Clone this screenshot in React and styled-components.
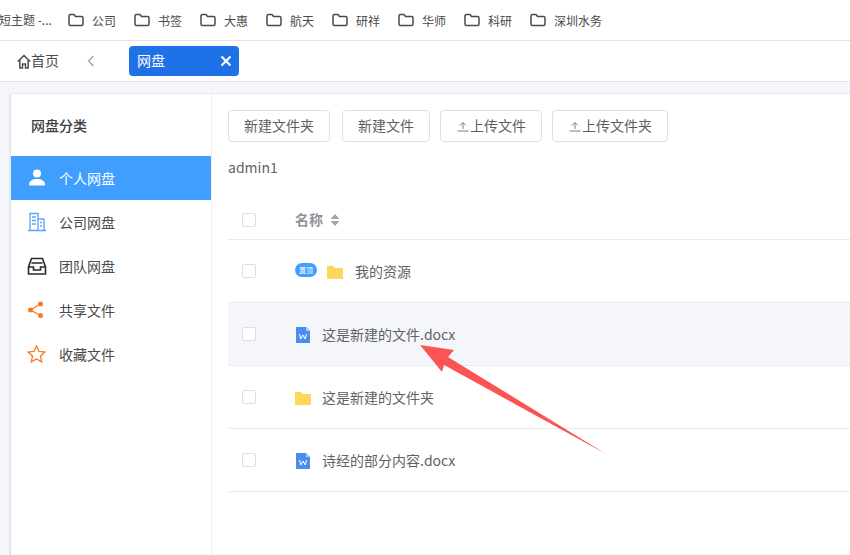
import React from "react";
import styled, { createGlobalStyle } from "styled-components";

const Global = createGlobalStyle`
  html, body { margin: 0; padding: 0; background: #fff; }
  body { font-family: "Noto Sans CJK SC", "Noto Sans", sans-serif; overflow: hidden; }
  * { box-sizing: border-box; }
`;

const Page = styled.div`
  position: relative;
  width: 850px;
  height: 555px;
  overflow: hidden;
  display: flex;
  flex-direction: column;
  background: #f4f6fb;
`;

const BookmarkBar = styled.div`
  height: 41px;
  flex: none;
  display: flex;
  align-items: center;
  background: #fff;
  border-bottom: 1px solid #e2e2e2;
  padding-left: 68px;
  position: relative;
  overflow: hidden;
`;

const Clipped = styled.span`
  position: absolute;
  left: -1px;
  top: 11px;
  font-size: 12px;
  line-height: 17px;
  color: #4a4a4a;
  white-space: nowrap;
`;

const Bookmark = styled.div`
  width: 66px;
  flex: none;
  display: flex;
  align-items: center;
  gap: 8px;
  font-size: 12px;
  line-height: 17px;
  color: #4a4a4a;
  white-space: nowrap;
  svg { flex: none; }
`;

const TabBar = styled.div`
  height: 41px;
  flex: none;
  display: flex;
  align-items: center;
  background: #fff;
  border-bottom: 1px solid #e1e3ea;
  padding: 0 0 0 17px;
`;

const HomeLink = styled.div`
  display: flex;
  align-items: center;
  font-size: 14px;
  line-height: 20px;
  color: #4d4d4d;
  width: 70px;
  span { position: relative; top: -1px; }
  svg { flex: none; }
`;

const Chevron = styled.svg`
  width: 8px;
  height: 12px;
  margin-right: 34px;
`;

const ActiveTab = styled.div`
  width: 110px;
  height: 30px;
  border-radius: 4px;
  background: #1f71e8;
  color: #fff;
  font-size: 14px;
  display: flex;
  align-items: center;
  justify-content: space-between;
  padding: 0 7px 2px 8px;
  svg { position: relative; top: 1px; }
`;

const Body = styled.div`
  flex: 1;
  min-height: 0;
  padding: 11px 0 0 9px;
`;

const Panel = styled.div`
  width: 860px;
  height: 480px;
  background: #fff;
  border: 1px solid #e6e8ef;
  border-width: 1px 0 0 2px;
  border-radius: 4px 0 0 0;
  display: flex;
`;

const Sidebar = styled.aside`
  width: 201px;
  flex: none;
  border-right: 1px solid #eceef3;
`;

const SideTitle = styled.div`
  height: 62px;
  padding: 21px 0 0 20px;
  font-size: 14px;
  line-height: 20px;
  font-weight: 500;
  color: #3d3d3d;
`;

const SideItem = styled.div`
  height: 44px;
  display: flex;
  align-items: center;
  padding: 0 0 0 16px;
  gap: 12px;
  font-size: 14px;
  background: ${(p) => (p.$active ? "#409eff" : "transparent")};
  color: ${(p) => (p.$active ? "#fff" : "#4a4a4a")};
`;

const SideIcon = styled.svg`
  width: 20px;
  height: 20px;
  flex: none;
`;

const Main = styled.main`
  flex: 1;
  padding: 16px 0 0 16px;
  min-width: 0;
`;

const Toolbar = styled.div`
  display: flex;
  height: 32px;
`;

const Btn = styled.div`
  width: ${(p) => p.$w}px;
  margin-right: ${(p) => p.$gap}px;
  height: 32px;
  border: 1px solid #dcdfe6;
  border-radius: 4px;
  font-size: 14px;
  color: #5d5f63;
  display: flex;
  align-items: center;
  justify-content: center;
  background: #fff;
  padding-bottom: 2px;
`;

const Upload = styled.svg`
  width: 14px;
  height: 14px;
  flex: none;
  position: relative;
  top: 1px;
`;

const Crumb = styled.div`
  margin-top: 15px;
  font-size: 14px;
  line-height: 20px;
  color: #5f6268;
`;

const HeadRow = styled.div`
  margin-top: 23px;
  height: 40px;
  width: 640px;
  display: flex;
  align-items: center;
  border-bottom: 1px solid #e9ebf1;
  font-size: 14px;
  line-height: 18px;
  font-weight: 700;
  color: #909399;
`;

const HeadLabel = styled.span`
  position: relative;
  top: -1px;
`;

const Row = styled.div`
  height: 63px;
  width: 640px;
  display: flex;
  align-items: center;
  border-bottom: 1px solid #e9ebf1;
  background: ${(p) => (p.$hover ? "#f5f6fa" : "#fff")};
  font-size: 14px;
  color: #606266;
`;

const Check = styled.span`
  width: 14px;
  height: 14px;
  flex: none;
  margin: 0 39px 0 14px;
  background: #fff;
  border: 1px solid #dcdfe6;
  border-radius: 2px;
`;

const SortIcon = styled.svg`
  width: 10px;
  height: 12px;
  margin-left: 7px;
`;

const Pin = styled.span`
  width: 22px;
  height: 14px;
  flex: none;
  border-radius: 7px;
  background: #409eff;
  color: #fff;
  font-size: 7px;
  line-height: 14px;
  text-align: center;
  margin-right: 10px;
  position: relative;
  top: -1px;
`;

const FileGlyph = styled.svg`
  width: 16px;
  height: 16px;
  flex: none;
  margin-right: ${(p) => p.$gap}px;
  position: relative;
  top: 1px;
`;

const Arrow = styled.svg`
  position: absolute;
  left: 0;
  top: 0;
  pointer-events: none;
`;

const FolderOutline = () => (
  <svg width="16" height="14" viewBox="0 0 16 14" fill="none" stroke="#4a4a4a" strokeWidth="1.5">
    <path d="M1 3c0-1 .5-1.500 1.500-1.500h3.500l1.500 2h6c1 0 1.500.5 1.500 1.500v6c0 1-.5 1.500-1.500 1.500h-11c-1 0-1.500-.5-1.500-1.500z" />
  </svg>
);

const Folder = ({ gap }) => (
  <FileGlyph $gap={gap} viewBox="0 0 16 16">
    <path d="M0 2h6.200l1.600 2H16v11H0z" fill="#ffd65c" />
  </FileGlyph>
);

const Word = ({ gap }) => (
  <FileGlyph $gap={gap} viewBox="0 0 16 16">
    <path d="M1 0h10l4 4v12H1z" fill="#4a8df0" />
    <path d="M11 0l4 4h-4z" fill="#a9c9f8" />
    <path d="M4.500 7l1.300 5 2.200-4 2.200 4 1.300-5" fill="none" stroke="#fff" strokeWidth="1" />
  </FileGlyph>
);

const UploadIcon = () => (
  <Upload viewBox="0 0 14 14" fill="none" stroke="#7d7f84" strokeWidth="1">
    <path d="M7 10V3.500M4 6.500l3-3 3 3M1.500 12h11" />
  </Upload>
);

const bookmarks = ["公司", "书签", "大惠", "航天", "研祥", "华师", "科研", "深圳水务"];

export default function App() {
  return (
    <Page>
      <Global />
      <BookmarkBar>
        <Clipped>短主题 -...</Clipped>
        {bookmarks.map((b) => (
          <Bookmark key={b}>
            <FolderOutline />
            <span>{b}</span>
          </Bookmark>
        ))}
      </BookmarkBar>
      <TabBar>
        <HomeLink>
          <svg width="14" height="15" viewBox="0 0 14 15" fill="none" stroke="#4d4d4d" strokeWidth="1.500">
            <path d="M.8 7.500L7 1.500l6.200 6M2.800 6v8h2.700V10h3v4h2.700V6" />
          </svg>
          <span>首页</span>
        </HomeLink>
        <Chevron viewBox="0 0 8 12" fill="none" stroke="#9a9ea6" strokeWidth="1.300">
          <path d="M6.500 1l-5 5 5 5" />
        </Chevron>
        <ActiveTab>
          <span>网盘</span>
          <svg width="12" height="12" viewBox="0 0 12 12" stroke="#fff" strokeWidth="2.200" fill="none">
            <path d="M1.500 1.500l9 9M10.500 1.500l-9 9" />
          </svg>
        </ActiveTab>
      </TabBar>
      <Body>
        <Panel>
          <Sidebar>
            <SideTitle>网盘分类</SideTitle>
            <SideItem $active>
              <SideIcon viewBox="0 0 20 20" fill="#fff">
                <circle cx="10" cy="5.500" r="4" />
                <path d="M2 16.500c0-3.500 3.500-5.500 8-5.500s8 2 8 5.500c0 .7-.5 1-1 1H3c-.5 0-1-.3-1-1z" />
              </SideIcon>
              <span>个人网盘</span>
            </SideItem>
            <SideItem>
              <SideIcon viewBox="0 0 20 20" fill="none" stroke="#59a5f5" strokeWidth="1.300">
                <path d="M3 18V1.500h8V18M11 7h6v11M1 18.500h18M5 5h4M5 8.500h4M5 12h4M13 10.500h2M13 14h2" />
              </SideIcon>
              <span>公司网盘</span>
            </SideItem>
            <SideItem>
              <SideIcon viewBox="0 0 20 20" fill="none" stroke="#2b2b2b" strokeWidth="1.600">
                <path d="M1.500 11v7h17v-7l-3-8.500h-11zM1.500 11h5v3h7v-3h5M4.500 7h11" />
              </SideIcon>
              <span>团队网盘</span>
            </SideItem>
            <SideItem>
              <SideIcon viewBox="0 0 20 20" fill="#f87b22" stroke="#f87b22" strokeWidth="1.400">
                <circle cx="3.500" cy="10" r="1.800" />
                <circle cx="13.500" cy="4" r="1.800" />
                <circle cx="13.500" cy="15.500" r="1.800" />
                <path d="M3.500 10L13.500 4M3.500 10l10 5.500" fill="none" />
              </SideIcon>
              <span>共享文件</span>
            </SideItem>
            <SideItem>
              <SideIcon viewBox="0 0 20 20" fill="none" stroke="#f87b22" strokeWidth="1.300">
                <path d="M9.500 2l2.500 5.400 5.900.7-4.400 4 1.200 5.800-5.200-2.900-5.200 2.900 1.200-5.800-4.400-4 5.900-.7z" />
              </SideIcon>
              <span>收藏文件</span>
            </SideItem>
          </Sidebar>
          <Main>
            <Toolbar>
              <Btn $w={102} $gap={12}>新建文件夹</Btn>
              <Btn $w={88} $gap={10}>新建文件</Btn>
              <Btn $w={102} $gap={10}><UploadIcon />上传文件</Btn>
              <Btn $w={116} $gap={0}><UploadIcon />上传文件夹</Btn>
            </Toolbar>
            <Crumb>admin1</Crumb>
            <HeadRow>
              <Check />
              <HeadLabel>名称</HeadLabel>
              <SortIcon viewBox="0 0 10 12" fill="#a3a5aa">
                <path d="M5 0l4.500 5h-9zM5 12L.5 7h9z" />
              </SortIcon>
            </HeadRow>
            <Row>
              <Check />
              <Pin>置顶</Pin>
              <Folder gap={12} />
              我的资源
            </Row>
            <Row $hover>
              <Check />
              <Word gap={11} />
              这是新建的文件.docx
            </Row>
            <Row>
              <Check />
              <Folder gap={11} />
              这是新建的文件夹
            </Row>
            <Row>
              <Check />
              <Word gap={11} />
              诗经的部分内容.docx
            </Row>
          </Main>
        </Panel>
      </Body>
      <Arrow width="850" height="555" viewBox="0 0 850 555">
        <polygon points="420,345 454,350 448,357 606,454 444,365 442,372" fill="#fb5454" />
      </Arrow>
    </Page>
  );
}
